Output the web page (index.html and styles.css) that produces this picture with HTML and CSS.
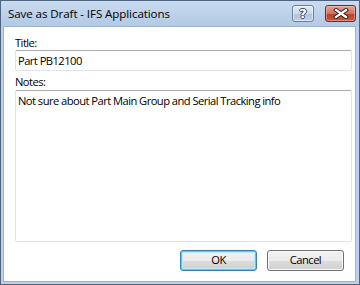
FILE: index.html
```html
<!DOCTYPE html>
<html lang="en">
<head>
    <meta charset="UTF-8">
    <title>Save as Draft - IFS Applications</title>
    <link rel="stylesheet" href="styles.css">
</head>
<body>

    <div class="window">

        <div class="titlebar">
            <span class="caption">Save as Draft - IFS Applications</span>
            <div class="caption-buttons">
                <div class="cap-btn help"><span>?</span></div>
                <div class="cap-btn close">
                    <svg width="16" height="11" viewBox="0 0 16 11">
                        <path d="M3 2 L13 9 M13 2 L3 9" stroke="#3a2420" stroke-width="4.2" stroke-linecap="square" fill="none"/>
                        <path d="M3 2 L13 9 M13 2 L3 9" stroke="#ffffff" stroke-width="2.2" stroke-linecap="square" fill="none"/>
                    </svg>
                </div>
            </div>
        </div>

        <div class="client">
            <label class="field-label">Title:</label>
            <div class="textbox">Part PB12100</div>

            <label class="field-label notes-label">Notes:</label>
            <div class="textbox notes">Not sure about Part Main Group and Serial Tracking info</div>

            <div class="buttons">
                <div class="button default">OK</div>
                <div class="button">Cancel</div>
            </div>
        </div>

    </div>

</body>
</html>
```

FILE: styles.css
```css
html, body {
  margin: 0;
  padding: 0;
}

body {
  background: #fff;
  font: 11.2px "Open Sans", "Noto Sans", Arial, sans-serif;
  letter-spacing: -0.55px;
  color: #000;
}

.window {
  box-sizing: border-box;
  width: 360px;
  height: 285px;
  display: flex;
  flex-direction: column;
  border: 1px solid #4d6580;
  padding: 0 3px 2px 2px;
  background: linear-gradient(#cadbef, #b3cae5 24px, #bcd2ea 26px, #bcd2ea);
}

.titlebar {
  height: 25px;
  display: flex;
  align-items: flex-start;
  justify-content: space-between;
}

.caption {
  margin: 5px 0 0 5px;
  line-height: 16px;
  font-size: 11.6px;
  letter-spacing: -0.1px;
  color: #000;
}

.caption-buttons {
  display: flex;
  gap: 11px;
  margin-top: 4px;
}

.cap-btn {
  box-sizing: border-box;
  height: 17px;
  border-radius: 3px;
  display: flex;
  align-items: center;
  justify-content: center;
}

.help {
  width: 22px;
  border: 1px solid #6b7f99;
  background: linear-gradient(#e4ecf6, #c9d8ea 50%, #afc5df 51%, #bccfe6);
  box-shadow: inset 0 0 0 1px rgba(255, 255, 255, 0.5);
}

.help span {
  font: bold 13px "DejaVu Sans", sans-serif;
  letter-spacing: 0;
  line-height: 13px;
  color: #fff;
  text-shadow: -1px 0 #3b4a5e, 1px 0 #3b4a5e, 0 -1px #3b4a5e, 0 1px #3b4a5e;
}

.close {
  width: 31px;
  border: 1px solid #6e2b23;
  background: linear-gradient(#e3a69a, #d0705f 50%, #bd3d2c 51%, #c9573f);
  box-shadow: inset 0 0 0 1px rgba(255, 210, 200, 0.45);
}

.close svg {
  display: block;
}

.client {
  flex: 1;
  display: flex;
  flex-direction: column;
  background: #fff;
  border: 1px solid #9fb4cc;
  padding: 8px 3px 10px 11px;
}

.field-label {
  line-height: 15px;
  height: 15px;
}

.notes-label {
  margin-top: 3px;
  margin-bottom: 1px;
}

.textbox {
  box-sizing: border-box;
  height: 21px;
  border: 1px solid #dfe3ea;
  border-top-color: #abadb3;
  border-radius: 2px;
  padding: 2px 3px 0 2px;
  line-height: 15px;
}

.notes {
  height: 152px;
}

.buttons {
  margin-top: auto;
  display: flex;
  justify-content: flex-end;
  gap: 10px;
  padding-right: 8px;
}

.button {
  box-sizing: border-box;
  width: 77px;
  height: 21px;
  border: 1px solid #707070;
  border-radius: 3px;
  background: linear-gradient(#f2f2f2, #ebebeb 50%, #dddddd 51%, #cfcfcf);
  box-shadow: inset 0 0 0 1px #fcfcfc;
  text-align: center;
  line-height: 18px;
}

.button.default {
  border-color: #3c7fb1;
  box-shadow: inset 0 0 0 1px #48d4f9, inset 0 0 0 2px #bdeafb;
}
```
